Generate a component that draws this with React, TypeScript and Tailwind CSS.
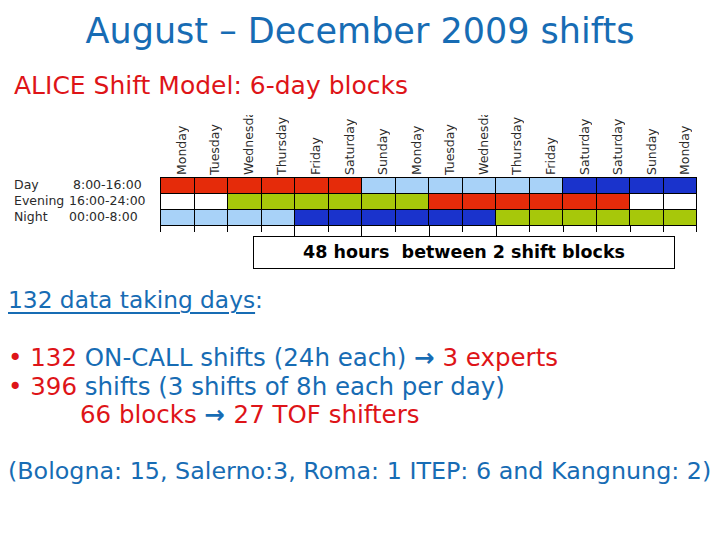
const R = 'bg-[#e52b0a]'
const G = 'bg-[#a7c80a]'
const L = 'bg-[#a8d2f8]'
const B = 'bg-[#1a33cc]'
const W = 'bg-white'

const days = [
  'Monday', 'Tuesday', 'Wednesday', 'Thursday', 'Friday', 'Saturday', 'Sunday', 'Monday',
  'Tuesday', 'Wednesday', 'Thursday', 'Friday', 'Saturday', 'Saturday', 'Sunday', 'Monday',
]

const rows = [
  { name: 'Day', time: '8:00-16:00', pad: 'pl-[4px]', cells: [R, R, R, R, R, R, L, L, L, L, L, L, B, B, B, B] },
  { name: 'Evening', time: '16:00-24:00', pad: '', cells: [W, W, G, G, G, G, G, G, R, R, R, R, R, R, W, W] },
  { name: 'Night', time: '00:00-8:00', pad: '', cells: [L, L, L, L, B, B, B, B, B, B, G, G, G, G, G, G] },
]

const longTicks = [4, 6, 8, 10]

function ShiftChart() {
  return (
    <div className="mt-[15px] flex font-['DejaVu_Sans',sans-serif] text-[12.5px] text-[#2a2a2a]">
      <div className="w-[160px] shrink-0 pt-[62px] pl-[14px]">
        {rows.map(row => (
          <div key={row.name} className="flex h-[16px] items-center leading-none">
            <span className="w-[55px]">{row.name}</span>
            <span className={row.pad}>{row.time}</span>
          </div>
        ))}
      </div>
      <div className="w-[537px] shrink-0">
        <div className="grid h-[61px] grid-cols-16">
          {days.map((day, i) => (
            <div key={i} className="flex h-full justify-center overflow-hidden pl-[9px]">
              {/* day names read bottom-up; long ones get cut at the top like in the slide */}
              <span className="h-[60px] rotate-180 whitespace-nowrap leading-[15px] [writing-mode:vertical-rl]">
                {day}
              </span>
            </div>
          ))}
        </div>
        <div className="mt-px grid grid-cols-16 gap-px bg-black p-px">
          {rows.map(row => row.cells.map((c, i) => (
            <div key={`${row.name}-${i}`} className={`h-[15px] ${c}`} />
          )))}
        </div>
        <div className="grid h-[10px] grid-cols-16">
          {days.map((_, i) => (
            <div
              key={i}
              className={`border-l border-black ${longTicks.includes(i) ? 'h-[10px]' : 'h-[6px]'} ${i === 15 ? 'border-r' : ''}`}
            />
          ))}
        </div>
        <div className="ml-[93px] flex h-[33px] w-[422px] items-center justify-center border border-black font-['Comic_Sans_MS','DejaVu_Sans',sans-serif] text-[17.5px] font-bold text-black">
          48 hours&nbsp; between 2 shift blocks
        </div>
      </div>
    </div>
  )
}

export default function App() {
  return (
    <div className="relative h-[540px] w-[720px] overflow-hidden bg-white font-['Comic_Sans_MS','DejaVu_Sans',sans-serif]">
      <h1 className="pt-[11px] text-center text-[35px] leading-[40px] text-[#176cb4]">
        August – December 2009 shifts
      </h1>
      <div className="mt-[21px] pl-[14px] text-[25px] leading-[28px] text-[#de1418]">
        ALICE Shift Model: 6-day blocks
      </div>
      <ShiftChart />
      <div className="mt-[17px] pl-[8px] text-[23.3px] leading-[28px] text-[#176cb4]">
        <span className="underline decoration-2 underline-offset-4">132 data taking days</span>:
      </div>
      <div className="mt-[30px] pl-[8px] text-[24.5px] leading-[28.5px]">
        <div>
          <span className="text-[#de1418]">• 132 </span>
          <span className="text-[#176cb4]">ON-CALL shifts (24h each) <b>→</b> </span>
          <span className="text-[#de1418]">3 experts</span>
        </div>
        <div>
          <span className="text-[#de1418]">• 396 </span>
          <span className="text-[#176cb4]">shifts (3 shifts of 8h each per day)</span>
        </div>
        <div className="pl-[72px]">
          <span className="text-[#de1418]">66 blocks </span>
          <b className="text-[#176cb4]">→ </b>
          <span className="text-[#de1418]">27 TOF shifters</span>
        </div>
      </div>
      <div className="mt-[27px] pl-[8px] text-[23.8px] leading-[28px] text-[#176cb4]">
        (Bologna: 15, Salerno:3, Roma: 1 ITEP: 6 and Kangnung: 2)
      </div>
    </div>
  )
}
